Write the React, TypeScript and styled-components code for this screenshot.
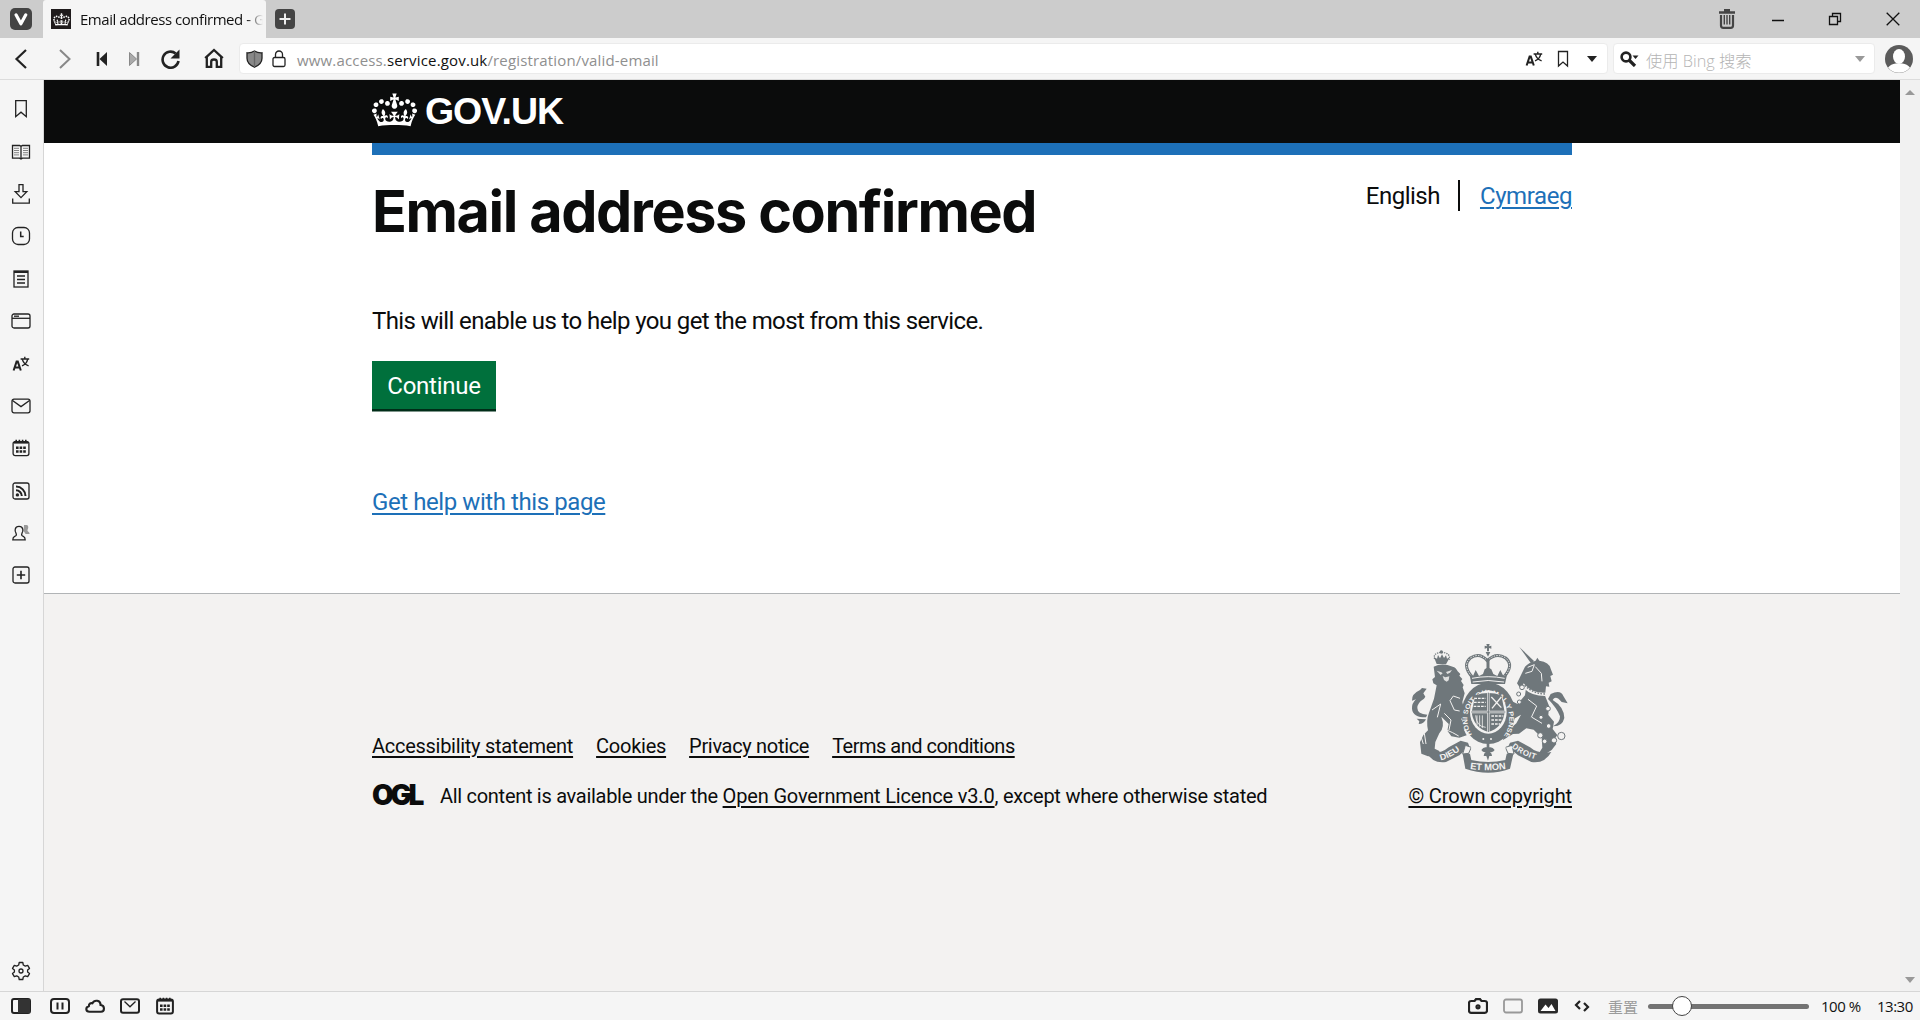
import React from "react";
import styled, { createGlobalStyle } from "styled-components";

const GlobalStyle = createGlobalStyle`
  * { box-sizing: border-box; }
  body { margin: 0; background: #f5f5f5; overflow: hidden; }
`;

const ui = `"Open Sans", "Noto Sans CJK SC", sans-serif`;
const transport = `Roboto, "Liberation Sans", sans-serif`;

/* ---------- Browser frame ---------- */
const Window = styled.div`
  width: 1920px;
  height: 1020px;
  display: flex;
  flex-direction: column;
  background: #f5f5f5;
  color: #111;
  font-family: ${ui};
  font-size: 15px;
`;
const TabBar = styled.div`
  height: 38px;
  flex: none;
  display: flex;
  background: #ccc;
`;
const Cell = styled.span<{ $w: number }>`
  width: ${(p) => p.$w}px;
  flex: none;
  display: flex;
  align-items: center;
  justify-content: center;
`;
const Tab = styled.div`
  width: 223px;
  display: flex;
  align-items: center;
  padding-left: 8px;
  background: #f5f5f5;
  border-radius: 3px 3px 0 0;
`;
const Favicon = styled.span`
  width: 20px;
  height: 20px;
  flex: none;
  display: flex;
  align-items: center;
  justify-content: center;
  background: #1f1b1c;
`;
const TabTitle = styled.span`
  width: 195px;
  padding-left: 9px;
  white-space: nowrap;
  letter-spacing: -0.46px;
  line-height: 24px;
  mask-image: linear-gradient(90deg, #000 176px, transparent 192px);
`;
const Spacer = styled.span`
  flex: 1;
`;
const Toolbar = styled.div`
  height: 42px;
  flex: none;
  display: flex;
  align-items: center;
  border-bottom: 1px solid #dcdcdc;
`;
const Field = styled.div<{ $w: number }>`
  width: ${(p) => p.$w}px;
  height: 31px;
  flex: none;
  display: flex;
  align-items: center;
  background: #fff;
  border: 1px solid #ebebeb;
  border-radius: 4px;
`;
const Address = styled.span`
  padding: 2px 0 0 8px;
  letter-spacing: 0.16px;
  color: #8f8f8f;
  b {
    font-weight: 400;
    color: #111;
  }
`;
const Placeholder = styled.span`
  padding: 2px 0 0 1px;
  color: #b4b4b4;
  font-size: 16.3px;
  font-weight: 300;
`;
const Body = styled.div`
  flex: 1;
  min-height: 0;
  display: flex;
`;
const Sidebar = styled.div`
  width: 44px;
  flex: none;
  display: flex;
  flex-direction: column;
  padding: 8px 2px 0 0;
  border-right: 1px solid #d6d6d6;
`;
const SideItem = styled.span`
  height: 42.4px;
  display: flex;
  align-items: center;
  justify-content: center;
  &:last-child {
    margin: auto 0 -1px;
  }
`;
const ScrollBar = styled.div`
  width: 20px;
  flex: none;
  display: flex;
  flex-direction: column;
  justify-content: space-between;
  align-items: center;
  padding: 9px 0 8px;
  background: #f1f1f1;
`;
const StatusBar = styled.div`
  height: 29px;
  flex: none;
  display: flex;
  align-items: center;
  border-top: 1px solid #d6d6d6;
  letter-spacing: -0.5px;
`;
const Reset = styled.span`
  width: 50px;
  padding-left: 10px;
  color: #9b9b9b;
  letter-spacing: 0;
`;
const Slider = styled.span`
  width: 161px;
  height: 5px;
  display: flex;
  align-items: center;
  padding-left: 24px;
  background: #737373;
  border-radius: 3px;
`;
const Thumb = styled.span`
  width: 20px;
  height: 20px;
  flex: none;
  background: #fff;
  border: 1px solid #444;
  border-radius: 50%;
`;
const StatusText = styled.span<{ $w: number }>`
  width: ${(p) => p.$w}px;
  white-space: nowrap;
`;

/* ---------- GOV.UK page ---------- */
const Page = styled.div`
  flex: 1;
  display: flex;
  flex-direction: column;
  background: #fff;
  color: #0b0c0c;
  font-family: ${transport};
`;
const Container = styled.div`
  width: 1200px;
  margin: 0 auto;
`;
const Header = styled.header`
  height: 63px;
  flex: none;
  background: #0b0c0c;
`;
const Logo = styled(Container)`
  height: 63px;
  display: flex;
  align-items: center;
  gap: 8px;
  padding-bottom: 3px;
  color: #fff;
`;
const LogoText = styled.span`
  padding-top: 1px;
  font: 700 37.5px/40px "Liberation Sans", Arial, sans-serif;
  letter-spacing: -1.1px;
`;
const BlueBar = styled.div`
  height: 12px;
  background: #1d70b8;
`;
const TopRow = styled.div`
  display: flex;
  justify-content: space-between;
  align-items: flex-start;
  padding-top: 25px;
`;
const Heading = styled.h1`
  margin: 0;
  font: 700 57.5px/62px Inter, "Liberation Sans", sans-serif;
  letter-spacing: -1.4px;
`;
const Languages = styled.div`
  display: flex;
  font-size: 24px;
  line-height: 32px;
`;
const Current = styled.span`
  height: 31px;
  padding-right: 18px;
  margin-right: 20px;
  border-right: 2px solid #0b0c0c;
  letter-spacing: -0.5px;
`;
const Link = styled.a<{ $dark?: boolean; $ls: number }>`
  color: ${(p) => (p.$dark ? "#0b0c0c" : "#1d70b8")};
  text-decoration: underline;
  text-decoration-thickness: ${(p) => (p.$dark ? 1.5 : 2)}px;
  text-underline-offset: 2.5px;
  letter-spacing: ${(p) => p.$ls}px;
  white-space: nowrap;
`;
const Paragraph = styled.p`
  margin: 64px 0 25px;
  font-size: 24px;
  line-height: 30px;
  letter-spacing: -0.61px;
`;
const Button = styled.button`
  width: 124px;
  height: 48px;
  display: flex;
  align-items: center;
  justify-content: center;
  padding: 2px 0 0;
  border: 0;
  background: #00703c;
  box-shadow: 0 2.5px 0 #002d18;
  color: #fff;
  font: 400 24px/30px ${transport};
  letter-spacing: -0.25px;
`;
const Help = styled.div`
  margin: 78px 0 76px;
  font-size: 24px;
  line-height: 30px;
`;
const Footer = styled.footer`
  flex: 1;
  padding-top: 48px;
  background: #f3f2f1;
  border-top: 1px solid #b1b4b6;
  font-size: 20px;
  line-height: 25px;
`;
const FooterRow = styled(Container)`
  display: flex;
  justify-content: space-between;
  align-items: flex-end;
`;
const FooterLinks = styled.nav`
  display: flex;
  gap: 23px;
  margin-bottom: 25px;
`;
const Licence = styled.div`
  display: flex;
  white-space: pre;
`;
const Ogl = styled.span`
  width: 68px;
  font: 900 28px/22px Inter, sans-serif;
  letter-spacing: -3.2px;
`;
const Run = styled.span<{ $ls: number }>`
  letter-spacing: ${(p) => p.$ls}px;
`;
const Copyright = styled.div`
  display: flex;
  flex-direction: column;
  align-items: center;
  gap: 10px;
`;

/* ---------- Icons ---------- */
type IconProps = { w?: number; h?: number; children: React.ReactNode; sw?: number; color?: string };
const IconSvg = styled.svg`
  display: block;
  flex: none;
`;
const Icon = ({ w = 20, h = 20, sw = 1.3, color = "#222", children }: IconProps) => (
  <IconSvg width={w} height={h} viewBox={`0 0 ${w} ${h}`} fill="none" stroke={color} strokeWidth={sw}>
    {children}
  </IconSvg>
);

const Crown = ({ w, h }: { w: number; h: number }) => (
  <svg width={w} height={h} viewBox="0 0 132 97" fill="#fff">
    <path d="M25 30.2c3.5 1.5 7.7-.2 9.1-3.7 1.5-3.6-.2-7.8-3.9-9.2-3.6-1.4-7.6.3-9.1 3.9-1.4 3.5.3 7.5 3.9 9zM9 39.5c3.6 1.5 7.8-.2 9.2-3.7 1.5-3.6-.2-7.8-3.9-9.1-3.6-1.5-7.6.2-9.1 3.8-1.4 3.5.3 7.5 3.8 9zM4.4 57.2c3.5 1.5 7.7-.2 9.1-3.8 1.5-3.6-.2-7.7-3.9-9.1-3.5-1.5-7.6.3-9.1 3.8-1.4 3.5.3 7.6 3.9 9.1zm38.3-21.4c3.5 1.5 7.7-.2 9.1-3.8 1.5-3.6-.2-7.7-3.9-9.1-3.6-1.5-7.6.3-9.1 3.8-1.3 3.6.4 7.7 3.9 9.1zm64.4-5.6c-3.6 1.5-7.8-.2-9.1-3.7-1.5-3.6.2-7.8 3.8-9.2 3.6-1.4 7.7.3 9.2 3.9 1.3 3.5-.4 7.5-3.9 9zm15.9 9.3c-3.6 1.5-7.7-.2-9.1-3.7-1.5-3.6.2-7.8 3.7-9.1 3.6-1.5 7.7.2 9.2 3.8 1.5 3.5-.3 7.5-3.8 9zm4.7 17.7c-3.6 1.5-7.8-.2-9.2-3.8-1.5-3.6.2-7.7 3.9-9.1 3.6-1.5 7.7.3 9.2 3.8 1.3 3.5-.4 7.6-3.9 9.1zM89.3 35.8c-3.6 1.5-7.8-.2-9.2-3.8-1.4-3.6.2-7.7 3.9-9.1 3.6-1.5 7.7.3 9.2 3.8 1.4 3.6-.3 7.7-3.9 9.1zM69.7 17.7l8.9 4.7V9.3l-8.9 2.8c-.2-.3-.5-.6-.9-.9L72.4 0H59.6l3.5 11.2c-.3.3-.6.5-.9.9l-8.8-2.8v13.1l8.8-4.7c.3.3.6.7.9.9l-5 15.4v.1c-.2.8-.4 1.6-.4 2.4 0 4.1 3.1 7.5 7 8.1h.2c.3 0 .7.1 1 .1.4 0 .7 0 1-.1h.2c4-.6 7.1-4.1 7.1-8.1 0-.8-.1-1.7-.4-2.4V34l-5.1-15.4c.4-.2.7-.6 1-.9zM66 92.8c16.9 0 32.8 1.1 47.1 3.2 4-16.9 8.9-26.7 14-33.5l-9.6-3.4c1 4.9 1.1 7.2 0 10.2-1.5-1.4-3-4.3-4.2-8.7L108.6 76c2.8-2 5-3.2 7.5-3.3-4.4 9.4-10 11.9-13.6 11.2-4.3-.8-6.3-4.6-5.6-7.9 1-4.7 5.7-5.9 8-.5 4.3-8.7-3-11.4-7.6-8.8 7.1-7.2 7.9-13.5 2.1-21.1-8 6.1-8.1 12.3-4.5 20.8-4.7-5.4-12.1-2.5-9.5 6.2 3.4-5.2 7.9-2 7.2 3.1-.6 4.3-6.4 7.8-13.5 7.2-10.3-.9-10.9-8-11.2-13.8 2.5-.5 7.1 1.8 11 7.3L80.2 60c-4.1 4.4-8 5.3-12.3 5.4 1.4-4.4 8-11.6 8-11.6H55.5s6.4 7.2 7.9 11.6c-4.2-.1-8-1-12.3-5.4l1.4 16.4c3.9-5.5 8.5-7.7 10.9-7.3-.3 5.8-.9 12.8-11.1 13.8-7.2.6-12.9-2.9-13.5-7.2-.7-5 3.8-8.3 7.1-3.1 2.7-8.7-4.6-11.6-9.4-6.2 3.7-8.5 3.6-14.7-4.6-20.8-5.8 7.6-5 13.9 2.2 21.1-4.7-2.6-11.9.1-7.7 8.8 2.3-5.5 7.1-4.2 8.1.5.7 3.3-1.3 7.1-5.7 7.9-3.5.7-9-1.8-13.5-11.2 2.5.1 4.7 1.3 7.5 3.3l-4.7-15.4c-1.2 4.4-2.7 7.2-4.3 8.7-1.1-3-.9-5.3 0-10.2l-9.5 3.4c5 6.9 9.9 16.7 14 33.5 14.8-2.1 30.8-3.2 47.7-3.2z" />
  </svg>
);

const Translate = () => (
  <Icon w={18} h={18}>
    <path d="M1.6 15.5L4.6 6.6h1.2l3 8.9M2.8 12.4h5" strokeWidth="2" />
    <path d="M8.6 4h8.6M12.8 1.8V4M15.6 4.4c-.6 3-2.8 5.4-5.6 6.4M10.4 4.6c.8 2.8 3 5 6.2 6.2" strokeWidth="1.4" />
  </Icon>
);
const Bookmark = () => (
  <Icon w={14} h={20}><path d="M1.7 1.7h10.6v16L7 13.2l-5.3 4.5z" /></Icon>
);
const Mail = ({ bold }: { bold?: boolean }) => (
  <Icon h={16} sw={bold ? 2 : 1.3}>
    <rect x="1" y="1.2" width="18" height="13.6" rx="2" />
    <path d={bold ? "M4.5 3.5L10 8.8l5.5-5.3" : "M1.5 2.5L10 8.6l8.5-6.1"} strokeWidth="1.3" />
  </Icon>
);
const CalendarIcon = ({ bold }: { bold?: boolean }) => (
  <Icon w={18} h={18} sw={bold ? 2 : 1.3}>
    <rect x="1.1" y="2.6" width="15.8" height="14" rx="2" />
    <path d="M2 3.4h14" strokeWidth="2.4" />
    <path d="M4.2.8v2M7.4.8v2M10.6.8v2M13.8.8v2" strokeWidth="1.6" />
    <path d="M4 8.7h2.6m1 0h2.6m1 0h2.6M4 12.5h2.6m1 0h2.6m1 0h2.6" strokeWidth="2.5" />
  </Icon>
);
const Caret = ({ color, up }: { color: string; up?: boolean }) => (
  <svg width="10" height="6" viewBox="0 0 10 6" fill={color}><path d={up ? "M0 6l5-5 5 5z" : "M0 0h10L5 6z"} /></svg>
);

const sideIcons = [
  <Bookmark />,
  <Icon h={16}><path d="M1.5 1.5H8.6L10 2.4l1.4-.9h7.1v12.6H11.4L10 15l-1.4-.9H1.5zM10 2.4V15" /><path d="M3 4.3h5M3 6.5h5M3 8.7h5M3 10.9h5M12 4.3h5M12 6.5h5M12 8.7h5M12 10.9h5" strokeWidth="0.9" stroke="#777" /></Icon>,
  <Icon h={22}><path d="M8 1.7h4v7h3.8L10 14.6 4.2 8.7H8zM1.7 15.5v4.6h16.6v-4.6" /></Icon>,
  <Icon><rect x="1.5" y="1.5" width="17" height="17" rx="5.5" /><path d="M9.7 5.5v5h3" strokeWidth="1.5" /></Icon>,
  <Icon w={16} h={18}><rect x="1" y="1" width="14" height="16" /><path d="M1 2h14" strokeWidth="2" /><path d="M4 6h8M4 9.5h8M4 13h8" strokeWidth="1.5" /></Icon>,
  <Icon h={16}><rect x="1" y="1" width="18" height="14" rx="2" /><path d="M1 5.3h18" /><path d="M3 3.2h5" /></Icon>,
  <Translate />,
  <Mail />,
  <CalendarIcon />,
  <Icon w={18} h={18}><rect x="1" y="1" width="16" height="16" rx="2" /><circle cx="5.4" cy="12.9" r="1.7" fill="#222" stroke="none" /><path d="M4 8.3a5.8 5.8 0 0 1 5.8 5.8M4 4.6a9.5 9.5 0 0 1 9.5 9.5" strokeWidth="2" /></Icon>,
  <Icon h={20}><path d="M13 2h2.5c1.5 0 2 1.5 1.7 3-.2 1.2-1 2-.6 3 .4.8 2 .8 2 3h-4l-2-3z" fill="#999" stroke="none" /><path d="M5 10.2C3.6 8.3 3.4 3.4 8 3.4s4.4 4.9 3 6.8c-.8 1.8-.3 2.6 1.3 3.2 1.5.6 1.9 1.7 1.9 3.5H1.8c0-1.8.4-2.9 1.9-3.5 1.6-.6 2.1-1.4 1.3-3.2z" /></Icon>,
  <Icon w={18} h={18}><rect x="1" y="1" width="16" height="16" rx="2" /><path d="M9 4.8v8.4M4.8 9h8.4" strokeWidth="1.6" /></Icon>,
];

/* Royal arms: lion and unicorn either side of the crowned garter, motto scroll beneath */
const RoyalArms = () => {
  const g = "#6f777b";
  const bg = "#f3f2f1";
  return (
    <svg width="160" height="132" viewBox="60 36 480 396" fill={g} stroke="none">
      <defs>
        <path id="garter" d="M246 314A63 74 0 1 1 344 314" />
        <path id="dieu" d="M152 391Q190 382 224 348" />
        <path id="mon" d="M240 417Q295 425 352 416" />
        <path id="droit" d="M365 352Q396 378 446 391" />
      </defs>
      {/* lion */}
      <path d="M132 82l8 20 28 1 12-22-9 5-3-10-6 8-6-11-6 12-6-10-3 11z" />
      <circle cx="154" cy="66" r="5" />
      <path d="M134 87q-6-18 20-20q28 1 24 22" fill="none" stroke={g} strokeWidth="4" strokeDasharray="4 3" />
      <path d="M131 110q25-13 57 0q10 2 15 14l8 8-3 5 9 10-4 6 8 12-3 7 6 18-7 26 7 30-10 22 14 26-6 6 8 16-22 7-24-4-12-17 4-20-22-22q12 30-6 50l-12 26-2 20 14 7 4 13-38 3-20-8-4-34 10-22 14-14q-6-30 2-50l16-45 8-40-10-6-3-12 8-7z" />
      <path d="M90 180l6-6 14 2-10 14 6 10-4 6q-20 12-20 28 0 18 30 20l-4 8q-40 0-42-26-1-16 12-28l-12 4q-2-20 24-32z" />
      <path d="M80 266l8 8-2 8q16 0 22-14z" />
      <path d="M140 122l14 5 4 3-6 5zM168 126l18-6-6 8-8 4zM158 138l8 4 12-3-2 12-6 4-8-5z" fill={bg} opacity=".85" />
      <path d="M210 205l-20-7-10 14 13 28 16 3M126 240l26-18-10 40M163 250l20 20-6 30" fill="none" stroke={bg} strokeWidth="3" />
      <path d="M92 316l8 26M103 310l5 32M170 300l18 8 18 10" fill="none" stroke={bg} strokeWidth="3" />
      {/* unicorn */}
      <path d="M388 51l44 42-8 8z" />
      <path d="M405 110q10-12 32-18l5-9 6 9q30 4 34 24l7 18-8 4 4 16-9 4 2 12-10-1-3 28 12 30-2 28 17 20-4 22 14 18-9 13 6 14-14 18-24 16-16-3 12-20-2-30-24-24-22-4-22 16-18 1-30 18 2-12-8-4 28-18 18-16 14-26q-18 10-20 12l-18-8 8-16-20-16 2-12-22-12 10-10 18 2 12 18 20 10 22-26 4-28-20 4-8-12z" />
      <path d="M482 192q30-14 38 6l13 22-18-4q-18-22-27-6q34 20 35 54q-6 26-34 25q22-12 21-30q-10-26-36-52z" />
      <path d="M401 160q26 32 70 28l-6 10q-44 0-68-28z" fill={bg} />
      <path d="M404 166q26 26 62 26" fill="none" stroke={g} strokeWidth="4" strokeDasharray="5 4" />
      <path d="M413 112l20-8-7 20-20 6M436 110l18 20 2 24M414 208l26 20-16 34M426 262l30 18" fill="none" stroke={bg} strokeWidth="3" />
      <g fill={bg} stroke={g} strokeWidth="3">
        <circle cx="396" cy="172" r="7" /><circle cx="386" cy="192" r="6" /><circle cx="388" cy="216" r="6" />
        <circle cx="474" cy="236" r="7" /><circle cx="453" cy="262" r="6" /><circle cx="476" cy="288" r="7" />
        <circle cx="451" cy="316" r="8" /><circle cx="464" cy="334" r="7" /><circle cx="514" cy="318" r="11" />
        <circle cx="492" cy="331" r="8" />
      </g>
      {/* crown */}
      <path d="M289 42h10l-2 7 7-2v9l-7-2v10h-6V54l-7 2v-9l7 2zM287 66h14l-7 14z" />
      <path d="M246 140q-30-34-5-56 28-18 51 8 26-26 55-8 26 22-5 56" fill="none" stroke={g} strokeWidth="9" />
      <path d="M246 140q-30-34-5-56 28-18 51 8 26-26 55-8 26 22-5 56" fill="none" stroke={bg} strokeWidth="3" strokeDasharray="4 4" />
      <path d="M294 86v40" stroke={g} strokeWidth="9" />
      <path d="M244 162l-5-28 10 4 8-18 10 18 12-6 5-14 10-6 10 6 6 14 12 6 9-18 9 18 11-4-6 28z" />
      <path d="M246 145q48-10 98 0M248 156q46-9 94 0" fill="none" stroke={bg} strokeWidth="3" />
      {/* garter */}
      <ellipse cx="295" cy="250" rx="80" ry="92" />
      <ellipse cx="295" cy="246" rx="55" ry="65" fill={bg} />
      <text fontFamily="Liberation Sans, sans-serif" fontWeight="700" fontSize="20" fill={bg}>
        <textPath href="#garter" textLength="318" lengthAdjust="spacingAndGlyphs">HONI SOIT QUI MAL Y PENSE</textPath>
      </text>
      <path d="M256 196q39-14 78 0l10 50q-6 48-49 60-44-12-50-60z" />
      <path d="M295 188v118M244 246h102" stroke={bg} strokeWidth="7" />
      <path d="M295 188v118M244 246h102" stroke={g} strokeWidth="3" />
      <g fill="none" stroke={bg} strokeWidth="4">
        <path d="M253 205h34M252 217h35M251 229h36" strokeDasharray="8 3" />
        <path d="M304 201l30 32M334 201l-28 34" />
        <path d="M261 256v30M269 256v34M277 256v38M257 256q2 34 30 36" strokeWidth="2.5" />
        <path d="M304 258h36M304 270h32M304 282h26" strokeDasharray="8 3" />
      </g>
      <circle cx="280" cy="327" r="3" fill={bg} /><circle cx="303" cy="327" r="3" fill={bg} />
      {/* scroll */}
      <path d="M108 366q40 10 68-14l36-20 22 6 8 22-18 2-16 14-40 20q-40 6-60-30z" />
      <path d="M484 366q-38 8-64-14l-36-20-24 6-10 22 18 2 16 14 40 20q40 6 60-30z" />
      <path d="M218 372q10-8 22 0l4 18q51 12 102 0l4-18q8-8 20 0l-10 44q-64 24-134 0z" />
      <path d="M226 346l18 6-8 18-18 2zM366 346l-20 6 8 18 18 2z" fill={bg} stroke={g} strokeWidth="3" />
      <path d="M242 342q52 16 106 0l-6 46q-46 10-94 0z" fill={bg} />
      <path d="M290 340h8v12q10-2 16 8-4 8-14 6 6 4 6 12h-8l-4 14-5-14h-8q0-8 6-12-9 2-13-6 6-10 16-8z" />
      <g fontFamily="Liberation Sans, sans-serif" fontWeight="700" fill={bg}>
        <text fontSize="25"><textPath href="#dieu" textLength="66" lengthAdjust="spacingAndGlyphs">DIEU</textPath></text>
        <text fontSize="28"><textPath href="#mon" textLength="108">ET MON</textPath></text>
        <text fontSize="24"><textPath href="#droit" textLength="80">DROIT</textPath></text>
      </g>
    </svg>
  );
};

export default function App() {
  return (
    <Window>
      <GlobalStyle />
      <TabBar>
        <Cell $w={42}>
          <Icon w={22} h={22}><rect width="22" height="22" rx="5" fill="#444" stroke="none" /><path d="M6 6.8l4.9 9 4.9-9" stroke="#fff" strokeWidth="3.2" strokeLinecap="round" strokeLinejoin="round" /></Icon>
        </Cell>
        <Cell $w={1} />
        <Tab>
          <Favicon><Crown w={17} h={13} /></Favicon>
          <TabTitle>Email address confirmed - G</TabTitle>
        </Tab>
        <Cell $w={38}>
          <Icon><rect width="20" height="20" rx="4" fill="#444" stroke="none" /><path d="M10 4.5v11M4.5 10h11" stroke="#eee" strokeWidth="2" /></Icon>
        </Cell>
        <Spacer />
        <Cell $w={50}>
          <Icon w={16} h={20} color="#444"><path d="M0 3.5h16M5 1.3h6" strokeWidth="2.4" /><path d="M2 6v10.5q0 2.3 2.3 2.3h7.4q2.3 0 2.3-2.3V6" strokeWidth="2.2" /><path d="M5.3 6v9.5M8 6v9.5M10.7 6v9.5" strokeWidth="1.4" /></Icon>
        </Cell>
        <Cell $w={52}><Icon w={12} h={12}><path d="M0 7.5h12" stroke="#111" strokeWidth="1.5" /></Icon></Cell>
        <Cell $w={62}><Icon w={14} h={14}><path d="M1.5 4.5h8v8h-8zM4.5 4V1.5h8v8h-2.5" stroke="#111" /></Icon></Cell>
        <Cell $w={54}><Icon w={14} h={14}><path d="M.7.7l12.6 12.6M13.3.7L.7 13.3" stroke="#111" /></Icon></Cell>
      </TabBar>
      <Toolbar>
        <Cell $w={42}><Icon sw={2.2}><path d="M15 1L5.5 10l9.5 9" /></Icon></Cell>
        <Cell $w={45}><Icon sw={2} color="#888"><path d="M5 1l9.5 9L5 19" /></Icon></Cell>
        <Cell $w={30}><Icon w={12} h={16}><path d="M2 1v14" strokeWidth="2.6" /><path d="M11 1v14L3.5 8z" fill="#222" stroke="none" /></Icon></Cell>
        <Cell $w={34}><Icon w={12} h={16} color="#888"><path d="M10 1v14" strokeWidth="2.4" /><path d="M1.5 1.5v13L8.500 8z" fill="#aaa" strokeWidth="1" /></Icon></Cell>
        <Cell $w={39}><Icon sw={2.6}><path d="M14.7 4.5A8 8 0 1 0 17.5 12" /><path d="M18.500.5v9h-9z" fill="#222" stroke="none" /></Icon></Cell>
        <Cell $w={47}><Icon w={20} h={21} sw={2.3}><path d="M1.2 10.2L10 2l8.8 8.2M2.8 9v9.8h4.4v-5q0-2.3 2.8-2.3t2.8 2.3v5h4.4V9" /></Icon></Cell>
        <Cell $w={2} />
        <Field $w={1369}>
          <Cell $w={28}><Icon w={17} h={18}><path d="M8.500 1c2.500 1.600 5 2 7.500 1.800v5.400c0 4-3 7-7.500 9-4.500-2-7.500-5-7.500-9V2.800C3.500 3 6 2.600 8.500 1z" fill="#888" /><path d="M8.500 1v16" stroke="#666" /></Icon></Cell>
          <Cell $w={21}><Icon w={14} h={18}><rect x="1" y="7.5" width="12" height="9" rx="1.5" /><path d="M3.500 7.500V4.500a3.500 3.500 0 0 1 7 0v3" /></Icon></Cell>
          <Address>www.access.<b>service.gov.uk</b>/registration/valid-email</Address>
          <Spacer />
          <Cell $w={30}><Translate /></Cell>
          <Cell $w={28}><Icon w={12} h={18}><path d="M1.5 1.5h9v14.5L6 12l-4.5 4z" /></Icon></Cell>
          <Cell $w={30}><Caret color="#222" /></Cell>
        </Field>
        <Cell $w={5} />
        <Field $w={262}>
          <Cell $w={31}><Icon w={19} h={16}><circle cx="6" cy="6" r="4.4" strokeWidth="2.6" /><path d="M9 9l6 6" strokeWidth="3.2" /><path d="M12.500 4.500h6L15.500 8z" fill="#222" stroke="none" /></Icon></Cell>
          <Placeholder>使用 Bing 搜索</Placeholder>
          <Spacer />
          <Cell $w={28}><Caret color="#999" /></Cell>
        </Field>
        <Cell $w={47}>
          <Icon w={28} h={28}><circle cx="14" cy="14" r="14" fill="#5b5b5b" stroke="none" /><path d="M3 22.5q3-3.5 7.5-4h7q4.5.5 7.5 4a14 14 0 0 1-22 0z" fill="#fff" stroke="none" /><ellipse cx="14" cy="11.5" rx="6" ry="7.5" fill="#fff" stroke="none" /></Icon>
        </Cell>
      </Toolbar>
      <Body>
        <Sidebar>
          {sideIcons.map((icon, i) => <SideItem key={i}>{icon}</SideItem>)}
          <SideItem>
            <Icon><path d="M8.2 1.5h3.600l.5 2.500 2 1.100 2.400-.8 1.800 3.100L16.600 9v2l1.900 1.600-1.800 3.100-2.400-.8-2 1.100-.5 2.500H8.200L7.700 16l-2-1.100-2.400.8-1.800-3.100L3.400 11V9L1.500 7.400l1.800-3.100 2.400.8 2-1.100z" strokeLinejoin="round" /><circle cx="10" cy="10" r="2" /></Icon>
          </SideItem>
        </Sidebar>
        <Page>
          <Header>
            <Logo><Crown w={45} h={34} /><LogoText>GOV.UK</LogoText></Logo>
          </Header>
          <Container>
            <BlueBar />
            <TopRow>
              <Heading>Email address confirmed</Heading>
              <Languages><Current>English</Current><Link $ls={-0.42}>Cymraeg</Link></Languages>
            </TopRow>
            <Paragraph>This will enable us to help you get the most from this service.</Paragraph>
            <Button>Continue</Button>
            <Help><Link $ls={-0.42}>Get help with this page</Link></Help>
          </Container>
          <Footer>
            <FooterRow>
              <div>
                <FooterLinks>
                  <Link $dark $ls={-0.28}>Accessibility statement</Link>
                  <Link $dark $ls={-0.25}>Cookies</Link>
                  <Link $dark $ls={-0.32}>Privacy notice</Link>
                  <Link $dark $ls={-0.5}>Terms and conditions</Link>
                </FooterLinks>
                <Licence>
                  <Ogl>OGL</Ogl>
                  <Run $ls={-0.29}>All content is available under the </Run>
                  <Link $dark $ls={-0.16}>Open Government Licence v3.0</Link>
                  <Run $ls={-0.24}>, except where otherwise stated</Run>
                </Licence>
              </div>
              <Copyright>
                <RoyalArms />
                <Link $dark $ls={-0.12}>© Crown copyright</Link>
              </Copyright>
            </FooterRow>
          </Footer>
        </Page>
        <ScrollBar><Caret up color="#999" /><Caret color="#999" /></ScrollBar>
      </Body>
      <StatusBar>
        <Cell $w={42}><Icon h={16} sw={2}><rect x="1" y="1" width="18" height="14" rx="2" /><path d="M7 1h12v14H7z" fill="#333" stroke="none" /></Icon></Cell>
        <Cell $w={36}><Icon h={16} sw={2}><rect x="1" y="1" width="18" height="14" rx="3" /><path d="M7.5 4.5v7M12.5 4.5v7" /></Icon></Cell>
        <Cell $w={34}><Icon h={14} sw={2.1}><path d="M4.5 12.7C.5 12.7.3 8.2 3.8 7.2 3.8 4.3 6 3.8 7.4 4.3 9.4.3 15.6 1 15.6 6c4.6.3 4.2 6.7.4 6.7z" /></Icon></Cell>
        <Cell $w={36}><Mail bold /></Cell>
        <Cell $w={34}><CalendarIcon bold /></Cell>
        <Spacer />
        <Cell $w={35}><Icon h={16} sw={2.2}><path d="M6.5 3L8 1.2h4L13.5 3h3.3Q19 3 19 5v7.5q0 2.3-2.2 2.3H3.2Q1 14.8 1 12.5V5q0-2 2.2-2z" /><circle cx="10" cy="8.8" r="1.5" /></Icon></Cell>
        <Cell $w={35}><Icon h={16} sw={1.8} color="#999"><rect x="1" y="1.5" width="18" height="13" rx="2" /></Icon></Cell>
        <Cell $w={35}><Icon h={16}><rect y="0.5" width="20" height="15" rx="2.5" fill="#2a2a2a" stroke="none" /><path d="M2.5 13l5-6.5 3 3.5 3-4 4 7z" fill="#fff" stroke="none" /></Icon></Cell>
        <Cell $w={33}><Icon w={16} h={12} sw={2.2}><path d="M6 1L2 5l4 4M10 3l4 4-4 4" /></Icon></Cell>
        <Reset>重置</Reset>
        <Slider><Thumb /></Slider>
        <Cell $w={12} />
        <StatusText $w={56}>100 %</StatusText>
        <StatusText $w={43}>13:30</StatusText>
      </StatusBar>
    </Window>
  );
}
